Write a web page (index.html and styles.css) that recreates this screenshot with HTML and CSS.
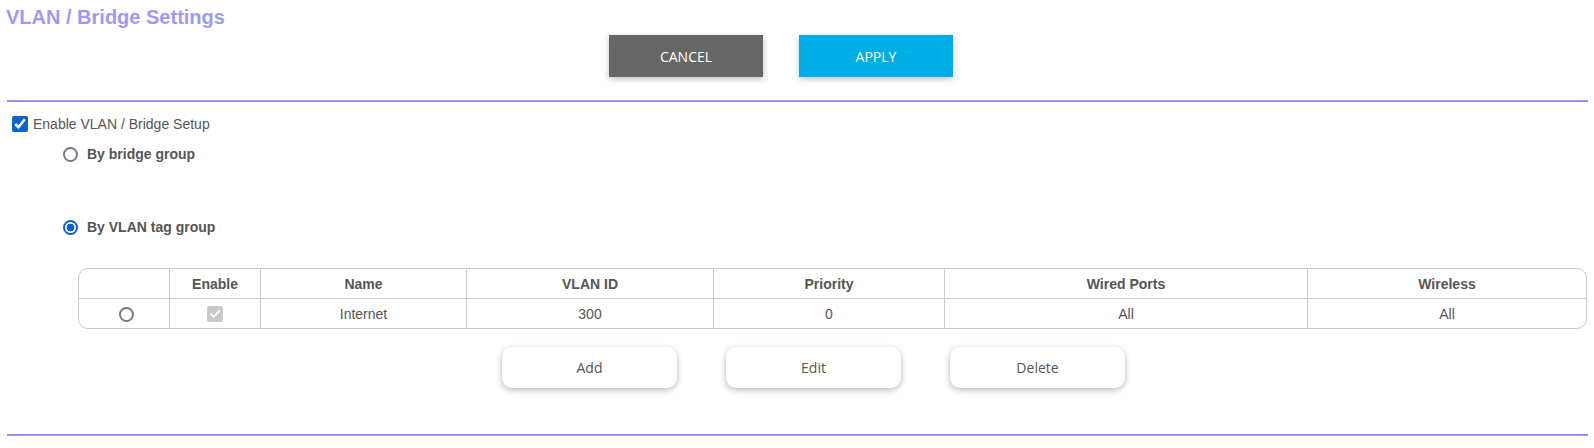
FILE: index.html
```html
<!DOCTYPE html>
<html>
<head>
<meta charset="utf-8">
<link rel="stylesheet" href="styles.css">
</head>
<body>
<h1 class="title">VLAN / Bridge Settings</h1>
<div class="actions">
  <button class="btn btn-cancel">CANCEL</button>
  <button class="btn btn-apply">APPLY</button>
</div>
<hr class="rule rule-top">
<label class="enable-row">
  <input type="checkbox" class="chk" checked>
  <span>Enable VLAN / Bridge Setup</span>
</label>
<label class="radio-row radio-bridge">
  <input type="radio" name="mode" class="rad">
  <span>By bridge group</span>
</label>
<label class="radio-row radio-vlan">
  <input type="radio" name="mode" class="rad" checked>
  <span>By VLAN tag group</span>
</label>
<div class="table-wrap">
  <table class="vlan-table">
    <colgroup>
      <col class="c1"><col class="c2"><col class="c3"><col class="c4"><col class="c5"><col class="c6"><col class="c7">
    </colgroup>
    <thead>
      <tr><th></th><th>Enable</th><th>Name</th><th>VLAN ID</th><th>Priority</th><th>Wired Ports</th><th>Wireless</th></tr>
    </thead>
    <tbody>
      <tr>
        <td><input type="radio" name="row" class="rad row-rad"></td>
        <td><span class="row-chk" aria-label="enabled"><svg viewBox="0 0 16 16" width="16" height="16"><rect x="0" y="0" width="16" height="16" rx="2.5" fill="#c9c9cc"/><path d="M4 8.2 L6.8 11 L12 5.2" fill="none" stroke="#fff" stroke-width="1.8" stroke-linecap="round" stroke-linejoin="round"/></svg></span></td>
        <td>Internet</td><td>300</td><td>0</td><td>All</td><td>All</td>
      </tr>
    </tbody>
  </table>
</div>
<div class="row-actions">
  <button class="pill">Add</button>
  <button class="pill">Edit</button>
  <button class="pill">Delete</button>
</div>
<hr class="rule rule-bottom">
</body>
</html>
```
FILE: styles.css
```css
html, body {
  margin: 0;
  padding: 0;
  background: #fff;
}
body {
  font-family: "Liberation Sans", Arial, sans-serif;
  color: #555;
  width: 1594px;
}
.title {
  margin: 0;
  padding: 5px 0 0 6px;
  font-size: 20px;
  line-height: 24px;
  font-weight: bold;
  color: #9f99f4;
}
.actions {
  display: flex;
  gap: 36px;
  margin-top: 6px;
  padding-left: 609px;
}
.btn {
  width: 154px;
  height: 42px;
  border: none;
  font-family: "Open Sans", "Segoe UI", sans-serif;
  font-size: 14px;
  color: #fff;
  box-shadow: 0 2px 6px rgba(0,0,0,0.25);
  cursor: pointer;
}
.btn-cancel { background: #666666; }
.btn-apply { background: #00aee6; }
.rule {
  border: none;
  height: 2px;
  background: #9b94ee;
  margin: 0 6px 0 7px;
}
.rule-top { margin-top: 23px; }
.rule-bottom { margin-top: 46px; }
.enable-row {
  display: flex;
  align-items: center;
  height: 20px;
  margin-top: 12px;
  padding-left: 12px;
  font-size: 14px;
  color: #555;
}
.chk {
  width: 16px;
  height: 16px;
  margin: 0 5px 0 0;
  accent-color: #0b62d6;
}
.radio-row {
  display: flex;
  align-items: center;
  height: 20px;
  padding-left: 63px;
  font-size: 14px;
  font-weight: bold;
  color: #555;
}
.radio-bridge { margin-top: 10px; }
.radio-vlan { margin-top: 53px; }
.rad {
  appearance: none;
  -webkit-appearance: none;
  box-sizing: border-box;
  width: 15px;
  height: 15px;
  margin: 0 9px 0 0;
  border: 2px solid #7b7888;
  border-radius: 50%;
  background: #fff;
}
.rad:checked {
  border-color: #0b62d6;
  background: radial-gradient(circle, #0b62d6 0 3.6px, #fff 4.2px);
}
.table-wrap {
  margin: 31px 8px 0 78px;
}
.vlan-table {
  width: 1507px;
  table-layout: fixed;
  border-collapse: separate;
  border-spacing: 0;
  border: 1px solid #cccccc;
  border-radius: 10px;
  font-size: 14px;
  color: #555;
}
.c1 { width: 90px; }
.c2 { width: 91px; }
.c3 { width: 206px; }
.c4 { width: 247px; }
.c5 { width: 231px; }
.c6 { width: 363px; }
.c7 { width: 279px; }
.vlan-table th, .vlan-table td {
  height: 29px;
  padding: 0;
  text-align: center;
  vertical-align: middle;
  border-left: 1px solid #cccccc;
}
.vlan-table th:first-child, .vlan-table td:first-child {
  border-left: none;
}
.vlan-table th {
  font-weight: bold;
  border-bottom: 1px solid #cccccc;
}
.row-rad {
  margin: 0 0 0 4px;
  vertical-align: middle;
}
.row-chk {
  display: inline-block;
  width: 16px;
  height: 16px;
  vertical-align: middle;
}
.row-chk svg {
  display: block;
}
.row-actions {
  display: flex;
  gap: 49px;
  margin-top: 18px;
  padding-left: 502px;
}
.pill {
  width: 175px;
  height: 41px;
  border: none;
  border-radius: 10px;
  background: #fff;
  box-shadow: 0 2px 6px rgba(0,0,0,0.28);
  font-family: "Open Sans", "Segoe UI", sans-serif;
  font-size: 14px;
  color: #555;
  cursor: pointer;
}
```
